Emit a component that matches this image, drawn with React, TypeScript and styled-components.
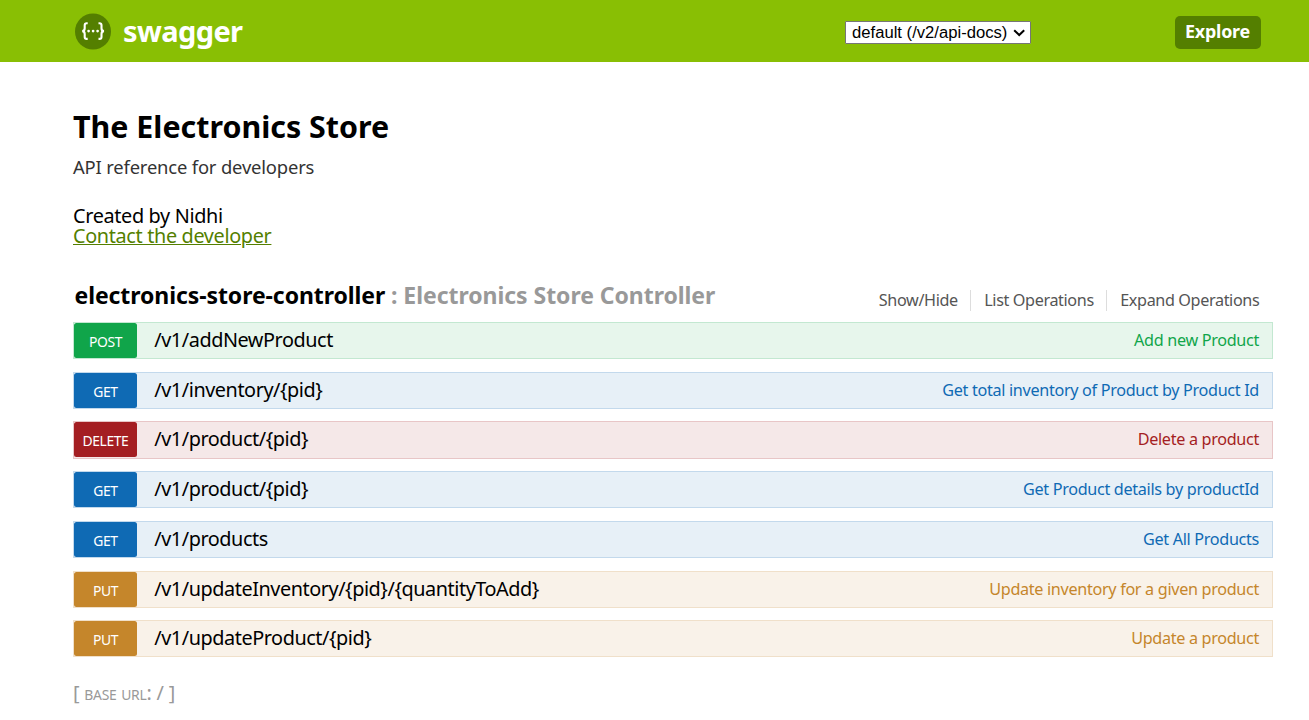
import React from 'react';
import styled, { createGlobalStyle } from 'styled-components';

type Method = 'post' | 'get' | 'delete' | 'put';

const palette: Record<Method, { solid: string; tint: string; line: string }> = {
  post: { solid: '#10a54a', tint: '#e7f6ec', line: '#c3e8d1' },
  get: { solid: '#0f6ab4', tint: '#e7f0f7', line: '#c3d9ec' },
  delete: { solid: '#a41e22', tint: '#f5e8e8', line: '#e8c6c7' },
  put: { solid: '#c5862b', tint: '#f9f2e9', line: '#f0e0ca' },
};

const GlobalStyle = createGlobalStyle`
  * { box-sizing: border-box; }
  body {
    margin: 0;
    background: #fff;
    color: #000;
    font-family: 'Droid Sans', 'Noto Sans', sans-serif;
    white-space: nowrap;
  }
  h1, h2, p, ul { margin: 0; padding: 0; }
  ul { list-style: none; }
`;

const Header = styled.header`
  display: flex;
  align-items: center;
  height: 62px;
  padding: 2px 48px 0 75px;
  background: #89bf04;
`;

const Logo = styled.div`
  display: flex;
  align-items: center;
  width: 770px;
  gap: 12px;
  margin-top: -2px;
`;

const LogoText = styled.span`
  margin-top: -1px;
  color: #fff;
  font-size: 29px;
  font-weight: 700;
  line-height: 36px;
  letter-spacing: -0.6px;
`;

const SelectBox = styled.div`
  position: relative;
  display: flex;

  svg {
    position: absolute;
    top: 8px;
    right: 5px;
    pointer-events: none;
  }
`;

const DocSelect = styled.select`
  appearance: none;
  width: 186px;
  height: 23px;
  padding: 0 0 0 6px;
  border: 1px solid #767676;
  border-radius: 1px;
  background-color: #fff;
  color: #000;
  font: 16.65px 'Liberation Sans', Arial, sans-serif;
`;

const ExploreButton = styled.button`
  width: 86px;
  height: 33px;
  margin: 1px 0 0 auto;
  padding: 0 1px 3px 0;
  border: 0;
  border-radius: 5px;
  background: #547f00;
  color: #fff;
  font: 700 17.9px 'Droid Sans', 'Noto Sans', sans-serif;
  letter-spacing: -0.2px;
`;

const Main = styled.main`
  width: 1200px;
  margin-left: 73px;
  padding-top: 47px;
`;

const Title = styled.h1`
  font-size: 30.4px;
  font-weight: 700;
  line-height: 36px;
`;

const Description = styled.p`
  margin-top: 10px;
  color: #333;
  font-size: 18.4px;
  line-height: 24px;
  letter-spacing: -0.17px;
`;

const Author = styled.div`
  display: flex;
  flex-direction: column;
  align-items: flex-start;
  margin-top: 27px;
  font-size: 19.84px;
  line-height: 20px;
  letter-spacing: -0.34px;
`;

const ContactLink = styled.a`
  color: #547f00;
  text-decoration: underline;
`;

const ResourceHeader = styled.div`
  display: flex;
  justify-content: space-between;
  height: 42.1px;
  margin-top: 34px;
  padding: 0 13.7px 0 1.5px;
`;

const ResourceTitle = styled.h2`
  font-size: 23px;
  font-weight: 700;
  line-height: 30px;
  letter-spacing: -0.08px;

  span {
    color: #999;
    letter-spacing: -0.05px;
  }
`;

const Options = styled.ul`
  display: flex;
  margin-top: 10px;
`;

const Option = styled.li`
  height: 21px;
  padding: 0 12.7px 0 12.8px;
  border-right: 1px solid #ddd;
  color: #555;
  font-size: 16.2px;
  line-height: 20px;
  letter-spacing: -0.38px;

  &:last-child {
    padding-right: 0;
    border-right: 0;
  }
`;

const Operations = styled.ul`
  display: flex;
  flex-direction: column;
  gap: 12.5px;
`;

const Operation = styled.li<{ $method: Method }>`
  display: flex;
  height: 37.2px;
  padding-right: 13px;
  border: 1px solid ${p => palette[p.$method].line};
  background: ${p => palette[p.$method].tint};
`;

const MethodBadge = styled.span<{ $method: Method }>`
  width: 63px;
  height: 35px;
  border-radius: 2.5px;
  background: ${p => palette[p.$method].solid};
  color: #fff;
  font-size: 13.9px;
  line-height: 38px;
  letter-spacing: -0.4px;
  text-align: center;
  text-transform: uppercase;
`;

const Path = styled.span`
  margin-left: 17.3px;
  font-size: 19.84px;
  line-height: 33px;
  letter-spacing: -0.44px;
`;

const Summary = styled.span<{ $method: Method }>`
  margin-left: auto;
  color: ${p => palette[p.$method].solid};
  font-size: 16.2px;
  line-height: 34px;
  letter-spacing: -0.32px;
`;

const BaseUrl = styled.p`
  margin-top: 23.2px;
  color: #999;
  font-size: 19.84px;
  line-height: 24px;
  letter-spacing: -0.2px;
`;

const SmallCaps = styled.span`
  font-size: 13.9px;
  letter-spacing: -0.25px;
  word-spacing: 1.3px;
  text-transform: uppercase;
`;

const operations: { method: Method; path: string; summary: string }[] = [
  { method: 'post', path: '/v1/addNewProduct', summary: 'Add new Product' },
  { method: 'get', path: '/v1/inventory/{pid}', summary: 'Get total inventory of Product by Product Id' },
  { method: 'delete', path: '/v1/product/{pid}', summary: 'Delete a product' },
  { method: 'get', path: '/v1/product/{pid}', summary: 'Get Product details by productId' },
  { method: 'get', path: '/v1/products', summary: 'Get All Products' },
  { method: 'put', path: '/v1/updateInventory/{pid}/{quantityToAdd}', summary: 'Update inventory for a given product' },
  { method: 'put', path: '/v1/updateProduct/{pid}', summary: 'Update a product' },
];

function SwaggerMark() {
  return (
    <svg width="36" height="37" viewBox="0 0 36 37" fill="none">
      <circle cx="18" cy="18.5" r="18" fill="#547f00" />
      <g stroke="#fff" strokeWidth="2.1">
        <path d="M12.7 10.3h-1q-2 0-2 2v2.9q0 2.8-2.5 2.9q2.5.1 2.5 2.9v2.9q0 2 2 2h1" />
        <path d="M23.5 10.3h1q2 0 2 2v2.9q0 2.8 2.5 2.9q-2.5.1-2.5 2.9v2.9q0 2-2 2h-1" />
      </g>
      <g fill="#fff">
        <circle cx="13.6" cy="18.1" r="1.35" />
        <circle cx="18.1" cy="18.1" r="1.35" />
        <circle cx="22.6" cy="18.1" r="1.35" />
      </g>
    </svg>
  );
}

export default function App() {
  return (
    <>
      <GlobalStyle />
      <Header>
        <Logo>
          <SwaggerMark />
          <LogoText>swagger</LogoText>
        </Logo>
        <SelectBox>
          <DocSelect>
            <option>default (/v2/api-docs)</option>
          </DocSelect>
          <svg width="13" height="8" viewBox="0 0 13 8" fill="none" stroke="#000" strokeWidth="2">
            <path d="M1.2 1.2l5 4.8l5-4.8" />
          </svg>
        </SelectBox>
        <ExploreButton>Explore</ExploreButton>
      </Header>
      <Main>
        <Title>The Electronics Store</Title>
        <Description>API reference for developers</Description>
        <Author>
          <span>Created by Nidhi</span>
          <ContactLink>Contact the developer</ContactLink>
        </Author>
        <ResourceHeader>
          <ResourceTitle>
            electronics-store-controller <span>: Electronics Store Controller</span>
          </ResourceTitle>
          <Options>
            <Option>Show/Hide</Option>
            <Option>List Operations</Option>
            <Option>Expand Operations</Option>
          </Options>
        </ResourceHeader>
        <Operations>
          {operations.map(op => (
            <Operation key={op.method + op.path} $method={op.method}>
              <MethodBadge $method={op.method}>{op.method}</MethodBadge>
              <Path>{op.path}</Path>
              <Summary $method={op.method}>{op.summary}</Summary>
            </Operation>
          ))}
        </Operations>
        <BaseUrl>
          [ <SmallCaps>base url</SmallCaps>: / ]
        </BaseUrl>
      </Main>
    </>
  );
}
